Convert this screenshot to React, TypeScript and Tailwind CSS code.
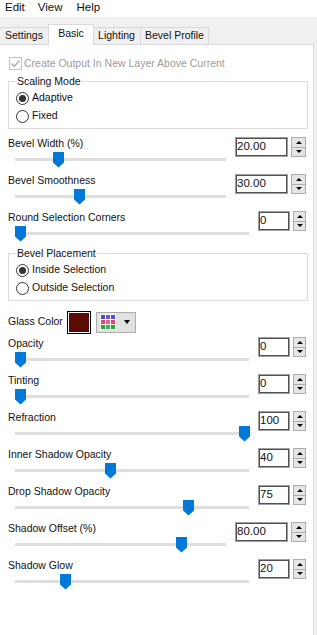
import React from "react";

type SliderRowProps = {
  label: string;
  value: string;
  pos: number;
  wide?: boolean;
};

const Spinner = ({ wide }: { wide?: boolean }) => (
  <div
    className={`flex h-[20px] flex-col border border-[#adadad] bg-[#e5e5e5] ${
      wide ? "w-[15px]" : "w-[13px]"
    }`}
  >
    <div className="flex flex-1 items-center justify-center border-b border-[#adadad]">
      <span className="h-0 w-0 border-x-[3px] border-b-[3px] border-x-transparent border-b-black" />
    </div>
    <div className="flex flex-1 items-center justify-center">
      <span className="h-0 w-0 border-x-[3px] border-t-[3px] border-x-transparent border-t-black" />
    </div>
  </div>
);

const SliderRow: React.FC<SliderRowProps> = ({ label, value, pos, wide }) => {
  return (
    <div className="mb-[6px]">
      <div className="flex h-[20px]">
        <span className="-mt-[1px] flex-1 leading-[15px]">{label}</span>
        <div
          className={`mr-[3px] flex h-[20px] items-center border border-[#a0a0a0] pl-[1px] text-[11.5px] shadow-[inset_0_0_0_1px_#505050] ${
            wide ? "w-[53px]" : "w-[32px]"
          }`}
        >
          {value}
        </div>
        <Spinner wide={wide} />
      </div>
      <div
        className={`relative -mt-[5px] ml-[7px] h-[16px] ${
          wide ? "w-[211px]" : "w-[234px]"
        }`}
      >
        <div className="absolute left-0 right-0 top-[6px] h-[3px] bg-[#dedede]" />
        <svg
          width="11"
          height="16"
          viewBox="0 0 11 16"
          className="absolute top-0"
          style={{ left: pos }}
        >
          <path d="M0 0H11V10.5L5.5 15.5L0 10.5Z" fill="#0078d7" />
        </svg>
      </div>
    </div>
  );
};

const Radio = ({ label, checked }: { label: string; checked?: boolean }) => (
  <div className="flex h-[18px] items-center">
    <span className="flex h-[13px] w-[13px] items-center justify-center rounded-full border border-[#333333]">
      {checked && <span className="h-[7px] w-[7px] rounded-full bg-[#333333]" />}
    </span>
    <span className="ml-[3px]">{label}</span>
  </div>
);

const Group = ({ title, children }: { title: string; children: React.ReactNode }) => (
  <div className="relative w-[300px] border border-[#dcdcdc] pb-[3px] pl-[7px] pt-[7px]">
    <span className="absolute -top-[8px] left-[7px] bg-white px-[1px] leading-[15px]">
      {title}
    </span>
    {children}
  </div>
);

const gridColors = [
  "bg-[#4646e6]", "bg-[#7a4ae8]", "bg-[#4c4cf0]",
  "bg-[#e8465a]", "bg-[#f06478]", "bg-[#e84660]",
  "bg-[#34a046]", "bg-[#40b052]", "bg-[#34a046]",
];

export default function App() {
  return (
    <div className="flex h-[635px] w-[317px] flex-col bg-[#f0f0f0] font-['Liberation_Sans',Arial,sans-serif] text-[10.5px] text-[#111111]">
      {/* menu */}
      <div className="flex h-[17px] bg-white text-[11.5px] leading-[14px]">
        <span className="ml-[5px]">Edit</span>
        <span className="ml-[13px]">View</span>
        <span className="ml-[14px]">Help</span>
      </div>

      {/* tabs */}
      <div className="flex h-[27px] items-end">
        <div className="flex h-[17px] w-[49px] items-center justify-center border-r border-t border-[#d9d9d9]">
          Settings
        </div>
        <div className="relative z-10 -mb-[1px] -ml-[1px] flex h-[21px] w-[46px] items-start justify-center border-x border-t border-[#d9d9d9] bg-white pt-[1px] leading-[15px]">
          Basic
        </div>
        <div className="-ml-[1px] flex h-[17px] w-[48px] items-center justify-center border-r border-t border-[#d9d9d9]">
          Lighting
        </div>
        <div className="flex h-[17px] w-[68px] items-center justify-center border-r border-t border-[#d9d9d9]">
          Bevel Profile
        </div>
      </div>

      {/* panel */}
      <div className="flex w-[314px] flex-1 flex-col border-r border-t border-[#d9d9d9] bg-white pl-[8px] pr-[7px] pt-[11px]">
        <div className="flex h-[15px] items-center pl-[1px] text-[#9d9d9d]">
          <span className="flex h-[13px] w-[13px] items-center justify-center border border-[#c4c4c4]">
            <svg width="11" height="11" viewBox="0 0 11 11">
              <path d="M1.5 5.5L4.2 8.2L9.5 2.5" fill="none" stroke="#aaaaaa" strokeWidth="1.3" />
            </svg>
          </span>
          <span className="ml-[2px]">Create Output In New Layer Above Current</span>
        </div>

        <div className="mt-[10px]">
          <Group title="Scaling Mode">
            <Radio label="Adaptive" checked />
            <Radio label="Fixed" />
          </Group>
        </div>

        <div className="mt-[8px]">
          <SliderRow label="Bevel Width (%)" value="20.00" pos={38} wide />
          <SliderRow label="Bevel Smoothness" value="30.00" pos={59} wide />
          <SliderRow label="Round Selection Corners" value="0" pos={0} />
        </div>

        <div className="mt-[5px]">
          <Group title="Bevel Placement">
            <Radio label="Inside Selection" checked />
            <Radio label="Outside Selection" />
          </Group>
        </div>

        <div className="mt-[9px] flex h-[24px] items-center">
          <span className="w-[59px]">Glass Color</span>
          <div className="h-[23px] w-[24px] border border-black bg-white p-[1px]">
            <div className="h-full w-full bg-[#5e0b07]" />
          </div>
          <div className="ml-[5px] flex h-[21px] w-[40px] items-center border border-[#adadad] bg-[#e1e1e1] pl-[3px]">
            <div className="grid grid-cols-3 gap-[1px] bg-white p-[1px]">
              {gridColors.map((c, i) => (
                <span key={i} className={`h-[4px] w-[4px] ${c}`} />
              ))}
            </div>
            <span className="ml-[8px] h-0 w-0 border-x-[3.5px] border-t-[4px] border-x-transparent border-t-black" />
          </div>
        </div>

        <div className="mt-[3px]">
          <SliderRow label="Opacity" value="0" pos={0} />
          <SliderRow label="Tinting" value="0" pos={0} />
          <SliderRow label="Refraction" value="100" pos={224} />
          <SliderRow label="Inner Shadow Opacity" value="40" pos={90} />
          <SliderRow label="Drop Shadow Opacity" value="75" pos={168} />
          <SliderRow label="Shadow Offset (%)" value="80.00" pos={161} wide />
          <SliderRow label="Shadow Glow" value="20" pos={45} />
        </div>
      </div>
    </div>
  );
}
